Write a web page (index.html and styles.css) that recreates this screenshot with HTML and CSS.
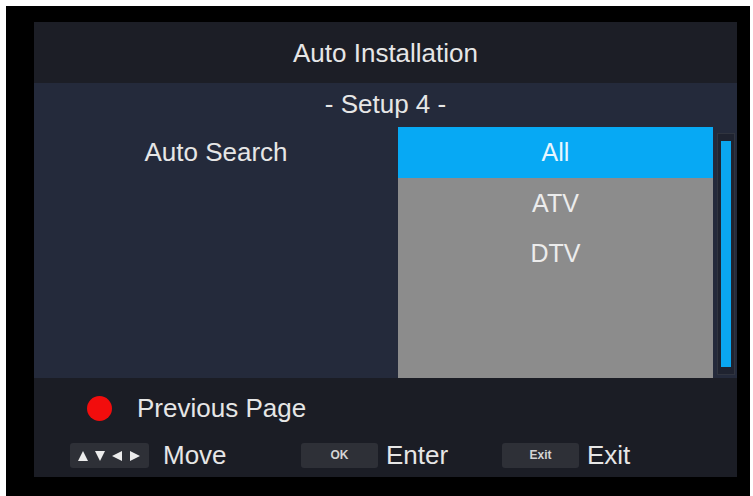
FILE: index.html
```html
<!DOCTYPE html>
<html lang="en">
<head>
    <meta charset="UTF-8">
    <meta name="viewport" content="width=device-width, initial-scale=1.0">
    <title>Auto Installation</title>
    <link rel="stylesheet" href="styles.css">
</head>
<body>
    <div class="screen">
        <div class="panel">
            <div class="header">Auto Installation</div>
            <div class="content">
                <div class="subtitle">- Setup 4 -</div>
                <div class="row">
                    <div class="label">Auto Search</div>
                    <div class="list">
                        <div class="item selected">All</div>
                        <div class="item">ATV</div>
                        <div class="item">DTV</div>
                    </div>
                    <div class="scrollbar"><div class="thumb"></div></div>
                </div>
            </div>
            <div class="footer">
                <div class="line">
                    <span class="dot"></span>
                    <span class="text">Previous Page</span>
                </div>
                <div class="line keys">
                    <div class="group move">
                        <span class="key arrows">
                            <svg width="79" height="25" viewBox="0 0 79 25">
                                <polygon points="8,18 13,8 18,18" fill="#ececec"/>
                                <polygon points="25,8 35,8 30,18" fill="#ececec"/>
                                <polygon points="42,13 52,8 52,18" fill="#ececec"/>
                                <polygon points="60,8 70,13 60,18" fill="#ececec"/>
                            </svg>
                        </span>
                        <span class="text">Move</span>
                    </div>
                    <div class="group enter">
                        <span class="key">OK</span>
                        <span class="text">Enter</span>
                    </div>
                    <div class="group">
                        <span class="key">Exit</span>
                        <span class="text">Exit</span>
                    </div>
                </div>
            </div>
        </div>
    </div>
</body>
</html>
```
FILE: styles.css
```css
body {
    margin: 0;
    background: #ffffff;
    font-family: "Liberation Sans", Arial, sans-serif;
    color: #e6e6e6;
}
.screen {
    margin: 6px 3px 0 6px;
    height: 490px;
    background: #000000;
    padding: 16px 13px 0 28px;
    box-sizing: border-box;
}
.panel {
    width: 703px;
    height: 455px;
    display: flex;
    flex-direction: column;
}
.header {
    height: 61px;
    background: #1c1e26;
    text-align: center;
    font-size: 26px;
    line-height: 63px;
}
.content {
    height: 295px;
    background: #242a3b;
}
.subtitle {
    height: 44px;
    text-align: center;
    font-size: 26px;
    line-height: 42px;
}
.row {
    display: flex;
    height: 251px;
}
.label {
    width: 364px;
    text-align: center;
    font-size: 26px;
    line-height: 51px;
}
.list {
    width: 315px;
    background: #8c8c8c;
}
.item {
    height: 50px;
    line-height: 50px;
    text-align: center;
    font-size: 25px;
    color: #ececec;
}
.item.selected {
    height: 51px;
    background: #07a9f4;
    color: #e8f6ff;
}
.scrollbar {
    margin: 6px 0 0 4px;
    width: 18px;
    height: 242px;
    background: #1f2330;
    border: 1px solid #30343f;
    box-sizing: border-box;
    padding: 7px 3px;
}
.thumb {
    height: 100%;
    background: #0aa6f0;
}
.footer {
    flex: 1;
    background: #1b1d25;
    padding: 15px 0 0 36px;
}
.line {
    display: flex;
    align-items: center;
    height: 30px;
}
.dot {
    width: 25px;
    height: 25px;
    border-radius: 50%;
    background: #f20d0d;
    margin: 0 25px 0 17px;
}
.text {
    font-size: 26px;
}
.keys {
    margin-top: 20px;
    height: 25px;
}
.group {
    display: flex;
    align-items: center;
}
.group.move {
    width: 231px;
}
.group.enter {
    width: 201px;
}
.key {
    width: 77px;
    height: 25px;
    border-radius: 3px;
    background: #2e3037;
    color: #d4d4d4;
    font-size: 12px;
    font-weight: bold;
    line-height: 25px;
    text-align: center;
    margin-right: 8px;
}
.key.arrows {
    width: 79px;
    margin-right: 14px;
}
.key svg {
    display: block;
}
```
